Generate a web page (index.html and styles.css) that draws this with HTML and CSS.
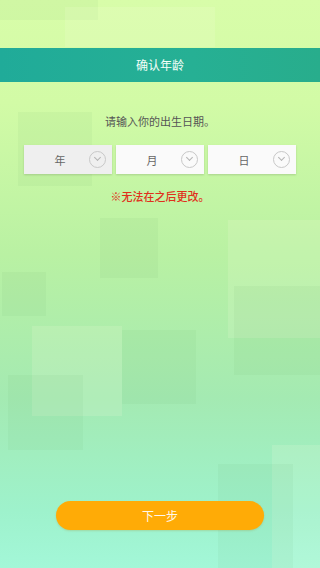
FILE: index.html
```html
<!DOCTYPE html>
<html lang="zh-CN">
<head>
    <meta charset="UTF-8">
    <meta name="viewport" content="width=device-width, initial-scale=1.0">
    <title>确认年龄</title>
    <link rel="stylesheet" href="styles.css">
</head>
<body>
    <div class="page">
        <!-- fundo decorativo -->
        <div class="tile t1 dark"></div>
        <div class="tile t2 light"></div>
        <div class="tile t3 dark"></div>
        <div class="tile t4 dark"></div>
        <div class="tile t5 light"></div>
        <div class="tile t6 dark"></div>
        <div class="tile t7 light"></div>
        <div class="tile t8 dark"></div>
        <div class="tile t9 dark"></div>
        <div class="tile t10 light"></div>
        <div class="tile t11 dark"></div>
        <div class="tile t12 dark"></div>

        <div class="header">确认年龄</div>

        <div class="content">
            <p class="prompt">请输入你的出生日期。</p>
            <div class="date-row">
                <div class="select active"><span>年</span><i class="arrow"></i></div>
                <div class="select"><span>月</span><i class="arrow"></i></div>
                <div class="select"><span>日</span><i class="arrow"></i></div>
            </div>
            <p class="warning">※无法在之后更改。</p>
        </div>

        <button class="next-btn">下一步</button>
    </div>
</body>
</html>
```

FILE: styles.css
```css
* {
    margin: 0;
    padding: 0;
    box-sizing: border-box;
}

body {
    font-family: "Noto Sans CJK SC", "Noto Sans", sans-serif;
    background: #a3f5d6;
}

.page {
    position: relative;
    min-height: 568px;
    display: flex;
    flex-direction: column;
    overflow: hidden;
    background: linear-gradient(180deg, #d8fda9 0%, #d2fba6 18%, #b9f1a3 45%, #a4eab2 70%, #9ef2cc 90%, #a3f7d8 100%);
}

.tile {
    position: absolute;
}

.tile.dark {
    background: rgba(90, 160, 90, 0.06);
}

.tile.light {
    background: rgba(255, 255, 230, 0.14);
}

.t1 { left: 0; top: 0; width: 98px; height: 20px; }
.t2 { left: 65px; top: 7px; width: 150px; height: 40px; }
.t3 { left: 18px; top: 112px; width: 74px; height: 74px; }
.t4 { left: 100px; top: 218px; width: 58px; height: 60px; }
.t5 { left: 228px; top: 220px; width: 92px; height: 118px; }
.t6 { left: 2px; top: 272px; width: 44px; height: 44px; }
.t7 { left: 32px; top: 326px; width: 90px; height: 90px; }
.t8 { left: 122px; top: 330px; width: 74px; height: 74px; }
.t9 { left: 234px; top: 286px; width: 86px; height: 89px; }
.t10 { left: 272px; top: 445px; width: 48px; height: 123px; }
.t11 { left: 8px; top: 375px; width: 75px; height: 75px; }
.t12 { left: 218px; top: 464px; width: 75px; height: 104px; }

.header {
    position: relative;
    margin-top: 48px;
    height: 34px;
    line-height: 34px;
    text-align: center;
    font-size: 12px;
    color: #f4fff9;
    background: linear-gradient(90deg, #20ab99 0%, #26b094 60%, #28ad8c 100%);
}

.content {
    position: relative;
    padding: 0 24px;
}

.prompt {
    margin-top: 30px;
    text-align: center;
    font-size: 11px;
    line-height: 18px;
    color: #555;
}

.date-row {
    display: grid;
    grid-template-columns: repeat(3, 1fr);
    gap: 4px;
    margin-top: 15px;
}

.select {
    position: relative;
    height: 29px;
    display: flex;
    align-items: center;
    background: #fafafa;
    box-shadow: 0 1px 2px rgba(0, 0, 0, 0.15);
}

.select.active {
    background: #efefef;
}

.select span {
    flex: 1;
    padding-right: 16px;
    text-align: center;
    font-size: 11px;
    color: #666;
}

.arrow {
    position: absolute;
    right: 6px;
    top: 6px;
    width: 17px;
    height: 17px;
    border: 1px solid #c8c8c8;
    border-radius: 50%;
}

.arrow::after {
    content: "";
    position: absolute;
    left: 5px;
    top: 3px;
    width: 4px;
    height: 4px;
    border-right: 1px solid #b4b4b4;
    border-bottom: 1px solid #b4b4b4;
    transform: rotate(45deg);
}

.warning {
    margin-top: 13px;
    text-align: center;
    font-size: 11px;
    line-height: 18px;
    font-weight: 500;
    color: #e0301c;
}

.next-btn {
    position: relative;
    display: block;
    width: 208px;
    height: 29px;
    margin: auto auto 38px;
    border: none;
    border-radius: 15px;
    background: #ffab06;
    color: #fff8ec;
    font-family: inherit;
    font-size: 12px;
    box-shadow: 0 1px 2px rgba(160, 110, 0, 0.2);
}
```
